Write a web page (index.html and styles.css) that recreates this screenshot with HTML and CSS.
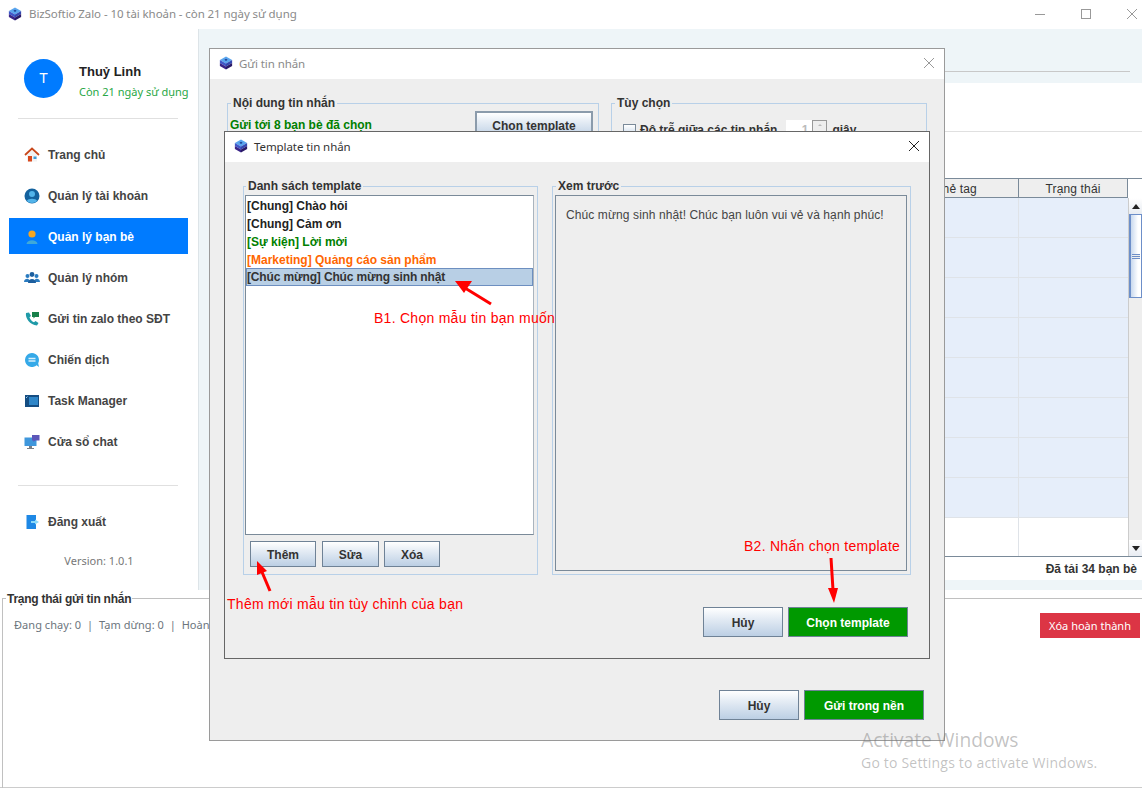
FILE: index.html
```html
<!DOCTYPE html>
<html lang="vi">
<head>
  <meta charset="UTF-8">
  <title>BizSoftio Zalo</title>
  <link rel="stylesheet" href="styles.css">
</head>
<body>
  <svg class="defs" width="0" height="0">
    <symbol id="cube" viewBox="0 0 16 16">
      <path d="M8 0.5 15 4.5 8 8.5 1 4.5Z" fill="#5aa5ee"/>
      <path d="M1 4.5 8 8.5V12L1 8Z" fill="#3f57c8"/>
      <path d="M15 4.5 8 8.5V12L15 8Z" fill="#3448b0"/>
      <path d="M1 8 8 12V15.5L1 11.5Z" fill="#3a2488"/>
      <path d="M15 8 8 12V15.5L15 11.5Z" fill="#2a1a68"/>
      <path d="M8 3.2 9.8 4.4 8 5.6 6.2 4.4Z" fill="#1c3f92"/>
    </symbol>
  </svg>

  <div class="titlebar">
    <svg class="app-icon"><use href="#cube"/></svg>
    <span class="titlebar-text">BizSoftio Zalo - 10 tài khoản - còn 21 ngày sử dụng</span>
    <div class="win-controls">
      <svg width="12" height="12" viewBox="0 0 12 12"><path d="M1 6.5H11" stroke="#999" stroke-width="1"/></svg>
      <svg width="12" height="12" viewBox="0 0 12 12"><rect x="1.5" y="1.5" width="9" height="9" fill="none" stroke="#999"/></svg>
      <svg width="12" height="12" viewBox="0 0 12 12"><path d="M1 1 11 11M11 1 1 11" stroke="#999"/></svg>
    </div>
  </div>

  <div class="middle">
    <aside class="sidebar">
      <div class="profile">
        <div class="avatar">T</div>
        <div class="profile-text">
          <div class="profile-name">Thuỷ Linh</div>
          <div class="profile-days">Còn 21 ngày sử dụng</div>
        </div>
      </div>
      <ul class="menu">
        <li class="menu-item">
          <svg class="menu-icon" viewBox="0 0 16 16"><path d="M3 8 8 3.5 13 8V14.5H3Z" fill="#f2f2f2"/><path d="M1 8 8 1.5 15 8" fill="none" stroke="#c8481c" stroke-width="1.8"/><rect x="4" y="9" width="4" height="5.5" fill="#d9481c"/><rect x="9.5" y="9.5" width="3" height="2.5" fill="#3d9ad6"/></svg>
          Trang chủ
        </li>
        <li class="menu-item">
          <svg class="menu-icon" viewBox="0 0 16 16"><circle cx="8" cy="8" r="7.5" fill="#14629e"/><circle cx="8" cy="6" r="3" fill="#52b4ea"/><path d="M2.8 13C4 10 12 10 13.2 13 11 15.6 5 15.6 2.8 13Z" fill="#52b4ea"/></svg>
          Quản lý tài khoản
        </li>
        <li class="menu-item active">
          <svg class="menu-icon" viewBox="0 0 16 16"><circle cx="8" cy="5" r="3.6" fill="#f5a623"/><path d="M2.5 15C3 10 13 10 13.5 15Z" fill="#3fa9d8"/></svg>
          Quản lý bạn bè
        </li>
        <li class="menu-item">
          <svg class="menu-icon" viewBox="0 0 16 16"><circle cx="3.5" cy="6" r="2" fill="#2a7bc0"/><circle cx="12.5" cy="6" r="2" fill="#2a7bc0"/><circle cx="8" cy="4.5" r="2.4" fill="#1d5f9e"/><path d="M0 12C0 8 5 8 5 10V12ZM16 12C16 8 11 8 11 10V12Z" fill="#2a7bc0"/><path d="M4 13C4 7.5 12 7.5 12 13Z" fill="#1d5f9e"/></svg>
          Quản lý nhóm
        </li>
        <li class="menu-item">
          <svg class="menu-icon" viewBox="0 0 16 16"><path d="M2 2C1 7 6 14 13 14.5L14.5 12 11.5 10 10 11.2C8 10.4 6 8 5.5 6.2L7 5 5 1.5Z" fill="#1f9aa8"/><path d="M8 1H15V6H11L9.5 7.5V6H8Z" fill="#17804a"/></svg>
          Gửi tin zalo theo SĐT
        </li>
        <li class="menu-item">
          <svg class="menu-icon" viewBox="0 0 16 16"><path d="M8 1A7 7 0 1 0 12.6 13.3L15 15 14.2 11.2A7 7 0 0 0 8 1Z" fill="#35a9e8"/><path d="M4.5 6.5H11.5M4.5 9H11.5" stroke="#d8f0fc" stroke-width="1.4"/></svg>
          Chiến dịch
        </li>
        <li class="menu-item">
          <svg class="menu-icon" viewBox="0 0 16 16"><rect x="1" y="2" width="14" height="12" fill="#154d82"/><rect x="5" y="4" width="9" height="8" fill="#2f86c8"/><path d="M2 5 3.5 3.5" stroke="#9fd0f0"/></svg>
          Task Manager
        </li>
        <li class="menu-item">
          <svg class="menu-icon" viewBox="0 0 16 16"><rect x="0.5" y="3.5" width="12" height="8.5" fill="#3f97dc"/><path d="M5 12H8V14H10V15H3V14H5Z" fill="#7a7f86"/><path d="M8 1H15.5V6.5H11L9.5 8V6.5H8Z" fill="#5c56b8"/></svg>
          Cửa sổ chat
        </li>
      </ul>
      <div class="logout">
        <div class="menu-item">
          <svg class="menu-icon" viewBox="0 0 16 16"><rect x="2.5" y="1" width="9.5" height="14" fill="#1e88e5"/><path d="M7 8H12" stroke="#8ad8f8" stroke-width="2"/><path d="M11 5.5 15 8 11 10.5Z" fill="#8ad8f8"/></svg>
          Đăng xuất
        </div>
      </div>
      <div class="version">Version: 1.0.1</div>
    </aside>

    <main class="main">
      <div class="band"><div class="band-line"></div></div>
      <div class="content">
        <div class="filter-row"></div>
        <div class="table-wrap">
          <div class="table">
            <div class="thead">
              <div class="th col-main"></div>
              <div class="th col-tag">Thẻ tag</div>
              <div class="th col-status">Trạng thái</div>
            </div>
            <div class="tr on"><div class="col-main"></div><div class="td col-tag"></div><div class="td col-status"></div></div>
            <div class="tr on"><div class="col-main"></div><div class="td col-tag"></div><div class="td col-status"></div></div>
            <div class="tr on"><div class="col-main"></div><div class="td col-tag"></div><div class="td col-status"></div></div>
            <div class="tr on"><div class="col-main"></div><div class="td col-tag"></div><div class="td col-status"></div></div>
            <div class="tr on"><div class="col-main"></div><div class="td col-tag"></div><div class="td col-status"></div></div>
            <div class="tr on"><div class="col-main"></div><div class="td col-tag"></div><div class="td col-status"></div></div>
            <div class="tr on"><div class="col-main"></div><div class="td col-tag"></div><div class="td col-status"></div></div>
            <div class="tr on"><div class="col-main"></div><div class="td col-tag"></div><div class="td col-status"></div></div>
            <div class="tr last"><div class="col-main"></div><div class="td col-tag"></div><div class="td col-status"></div></div>
          </div>
          <div class="scrollbar">
            <div class="scroll-btn"><span class="tri-up"></span></div>
            <div class="scroll-thumb"><span class="grip"></span></div>
            <div class="scroll-track"></div>
            <div class="scroll-btn"><span class="tri-down"></span></div>
          </div>
        </div>
        <div class="status-row">Đã tải 34 bạn bè</div>
      </div>
    </main>
  </div>

  <section class="send-status">
    <div class="send-status-legend">Trạng thái gửi tin nhắn</div>
    <div class="send-status-row">
      <span class="send-counts">Đang chạy: 0 &nbsp;|&nbsp; Tạm dừng: 0 &nbsp;|&nbsp; Hoàn thành: 0</span>
      <button class="btn-danger">Xóa hoàn thành</button>
    </div>
  </section>

  <!-- dialog gửi tin nhắn -->
  <div class="dialog dialog-send">
    <div class="dialog-title">
      <svg class="dialog-icon"><use href="#cube"/></svg>
      <span class="muted">Gửi tin nhắn</span>
      <svg class="dialog-close" viewBox="0 0 12 12"><path d="M1 1 11 11M11 1 1 11" stroke="#999"/></svg>
    </div>
    <div class="dialog-body send-body">
      <div class="send-top">
        <fieldset class="group group-content">
          <legend>Nội dung tin nhắn</legend>
          <div class="content-row">
            <span class="green-label">Gửi tới 8 bạn bè đã chọn</span>
            <button class="btn btn-focus">Chọn template</button>
          </div>
        </fieldset>
        <fieldset class="group group-options">
          <legend>Tùy chọn</legend>
          <div class="option-row">
            <span class="checkbox"></span>
            <span>Độ trễ giữa các tin nhắn</span>
            <span class="spinner"><span class="spinner-val">1</span><span class="spinner-btn"><span class="spinner-up"></span></span></span>
            <span>giây</span>
          </div>
        </fieldset>
      </div>
      <div class="dialog-actions send-actions">
        <button class="btn btn-cancel">Hủy</button>
        <button class="btn btn-green">Gửi trong nền</button>
      </div>
    </div>
  </div>

  <!-- dialog template -->
  <div class="dialog dialog-template">
    <div class="dialog-title">
      <svg class="dialog-icon"><use href="#cube"/></svg>
      <span>Template tin nhắn</span>
      <svg class="dialog-close" viewBox="0 0 12 12"><path d="M1 1 11 11M11 1 1 11" stroke="#222"/></svg>
    </div>
    <div class="dialog-body template-body">
      <div class="template-top">
        <fieldset class="group group-list">
          <legend>Danh sách template</legend>
          <ul class="template-list">
            <li>[Chung] Chào hỏi</li>
            <li>[Chung] Cảm ơn</li>
            <li class="t-green">[Sự kiện] Lời mời</li>
            <li class="t-orange">[Marketing] Quảng cáo sản phẩm</li>
            <li class="selected">[Chúc mừng] Chúc mừng sinh nhật</li>
          </ul>
          <div class="list-actions">
            <button class="btn btn-add">Thêm</button>
            <button class="btn btn-edit">Sửa</button>
            <button class="btn btn-del">Xóa</button>
          </div>
        </fieldset>
        <fieldset class="group group-preview">
          <legend>Xem trước</legend>
          <div class="preview">Chúc mừng sinh nhật! Chúc bạn luôn vui vẻ và hạnh phúc!</div>
        </fieldset>
      </div>
      <div class="dialog-actions template-actions">
        <button class="btn btn-cancel">Hủy</button>
        <button class="btn btn-green">Chọn template</button>
      </div>
    </div>
  </div>

  <!-- chú thích đỏ -->
  <div class="note note-b1">B1. Chọn mẫu tin bạn muốn</div>
  <div class="note note-b2">B2. Nhấn chọn template</div>
  <div class="note note-add">Thêm mới mẫu tin tùy chỉnh của bạn</div>
  <svg class="arrows" width="1142" height="789" viewBox="0 0 1142 789">
    <path d="M491 304 465 288" stroke="#f00" stroke-width="3"/>
    <path d="M455 281 472 281 464 293Z" fill="#f00"/>
    <path d="M270 591 262 572" stroke="#f00" stroke-width="3"/>
    <path d="M257 561 267 571 257 575Z" fill="#f00"/>
    <path d="M831 558 833 590" stroke="#f00" stroke-width="3"/>
    <path d="M834 603 828 588 838 588Z" fill="#f00"/>
  </svg>

  <div class="activate">
    <div class="activate-big">Activate Windows</div>
    <div class="activate-small">Go to Settings to activate Windows.</div>
  </div>
</body>
</html>
```

FILE: styles.css
```css
* {
  box-sizing: border-box;
}
body {
  margin: 0;
  width: 1142px;
  height: 789px;
  overflow: hidden;
  position: relative;
  background: #fff;
  font-family: 'Liberation Sans', sans-serif;
  font-size: 12px;
  color: #333;
  display: flex;
  flex-direction: column;
}
.defs {
  position: absolute;
}

/* title bar */
.titlebar {
  height: 29px;
  display: flex;
  align-items: center;
  padding: 0 0 2px 8px;
  flex-shrink: 0;
}
.app-icon {
  width: 14px;
  height: 14px;
  margin-right: 7px;
}
.titlebar-text {
  font-family: 'Noto Sans', sans-serif;
  font-size: 11.5px;
  letter-spacing: -0.08px;
  color: #8a8a8a;
}
.win-controls {
  margin-left: auto;
  display: flex;
  gap: 34px;
  padding-right: 4px;
}

/* layout */
.middle {
  height: 561px;
  display: flex;
  flex-shrink: 0;
}
.sidebar {
  width: 199px;
  border-right: 1px solid #dde4e8;
  padding: 29px 0 0 9px;
}
.profile {
  display: flex;
  align-items: center;
  gap: 16px;
  height: 40px;
  margin-left: 15px;
}
.avatar {
  width: 39px;
  height: 39px;
  border-radius: 50%;
  background: #007bff;
  color: #fff;
  font-size: 14px;
  display: flex;
  align-items: center;
  justify-content: center;
}
.profile-text {
  padding-top: 6px;
}
.profile-name {
  font-size: 13px;
  font-weight: bold;
  color: #222;
  margin-bottom: 5px;
}
.profile-days {
  font-family: 'Noto Sans', sans-serif;
  font-size: 11px;
  color: #28a745;
  white-space: nowrap;
}
.menu {
  list-style: none;
  margin: 20px 0 0 9px;
  padding: 17px 0 0;
  border-top: 1px solid #e0e0e0;
  width: 160px;
}
.menu-item {
  height: 36px;
  width: 179px;
  margin-left: -9px;
  margin-bottom: 5px;
  padding: 2px 0 0 15px;
  display: flex;
  align-items: center;
  gap: 8px;
  font-weight: bold;
  color: #444;
  white-space: nowrap;
}
.menu-item.active {
  background: #007bff;
  color: #fff;
}
.menu-icon {
  width: 16px;
  height: 16px;
  flex-shrink: 0;
}
.logout {
  margin: 26px 0 0 9px;
  width: 160px;
  padding-top: 17px;
  border-top: 1px solid #e0e0e0;
}
.version {
  font-family: 'Noto Sans', sans-serif;
  font-size: 11px;
  color: #777;
  text-align: center;
  width: 160px;
  margin: 14px 0 0 10px;
}

.main {
  flex: 1;
  background: #eef5f8;
  padding: 0 0 10px 10px;
  display: flex;
  flex-direction: column;
}
.band {
  height: 54px;
  flex-shrink: 0;
}
.band-line {
  margin: 42px 12px 0 0;
  border-top: 1px solid #c8c8c8;
}
.content {
  flex: 1;
  background: #fff;
  display: flex;
  flex-direction: column;
}
.filter-row {
  height: 49px;
  border-bottom: 1px solid #e0e0e0;
  margin-bottom: 46px;
  flex-shrink: 0;
}
.table-wrap {
  height: 379px;
  display: flex;
  border-top: 1px solid #7a8a99;
  border-bottom: 1px solid #7a8a99;
}
.table {
  flex: 1;
  overflow: hidden;
}
.thead {
  height: 19px;
  display: flex;
  background: #eee;
  border-bottom: 1px solid #7a8a99;
}
.th {
  text-align: center;
  line-height: 20px;
  letter-spacing: 0.15px;
  color: #333;
  border-right: 1px solid #7a8a99;
}
.tr {
  height: 40px;
  display: flex;
}
.tr.on {
  background: #e6eefa;
  border-bottom: 1px solid #dfe3e8;
}
.col-main {
  flex: 1;
}
.col-tag {
  width: 125px;
}
.col-status {
  width: 109px;
}
.td.col-tag {
  border-right: 1px solid #dfe3e8;
}
.scrollbar {
  width: 14px;
  margin-top: 19px;
  display: flex;
  flex-direction: column;
  background: #eee;
  border-left: 1px solid #ccc;
}
.scroll-btn {
  height: 16px;
  background: linear-gradient(#fff, #e8ecf2);
  display: flex;
  align-items: center;
  justify-content: center;
  flex-shrink: 0;
}
.scroll-thumb {
  height: 84px;
  border: 1px solid #6d8fc9;
  border-left-width: 2px;
  background: linear-gradient(90deg, #c9d9ee, #fff 70%);
  display: flex;
  align-items: center;
  justify-content: center;
}
.grip {
  width: 8px;
  height: 5px;
  border-top: 1px solid #6d8fc9;
  border-bottom: 1px solid #6d8fc9;
  background: linear-gradient(#eee 40%, #6d8fc9 40%, #6d8fc9 60%, #eee 60%);
}
.scroll-track {
  flex: 1;
}
.tri-up {
  border: 4px solid transparent;
  border-top: 0;
  border-bottom: 5px solid #222;
}
.tri-down {
  border: 4px solid transparent;
  border-bottom: 0;
  border-top: 5px solid #222;
}
.status-row {
  flex: 1;
  font-weight: bold;
  text-align: right;
  color: #333;
  padding: 5px 5px 0 0;
}

/* bottom panel */
.send-status {
  height: 198px;
  border-bottom: 1px solid #ccc;
  position: relative;
  padding: 8px 0 0 2px;
}
.send-status-legend {
  position: absolute;
  left: 6px;
  top: 2px;
  background: #fff;
  padding: 0 1px;
  font-weight: bold;
  letter-spacing: -0.25px;
  color: #333;
  z-index: 1;
}
.send-status-row {
  border-top: 1px solid #c0c0c0;
  border-left: 1px solid #c0c0c0;
  height: 190px;
  display: flex;
  justify-content: space-between;
  padding: 14px 2px 0 11px;
}
.send-counts {
  font-family: 'Noto Sans', sans-serif;
  font-size: 11px;
  letter-spacing: 0.05px;
  color: #6c757d;
  padding-top: 4px;
}
.btn-danger {
  width: 100px;
  height: 25px;
  border: 0;
  background: #dc3545;
  color: #fff;
  font-family: 'Noto Sans', sans-serif;
  font-size: 11px;
}

/* dialogs */
.dialog {
  position: absolute;
  background: #eee;
  display: flex;
  flex-direction: column;
}
.dialog-send {
  left: 209px;
  top: 48px;
  width: 736px;
  height: 693px;
  border: 1px solid #9a9a9a;
}
.dialog-template {
  left: 224px;
  top: 131px;
  width: 706px;
  height: 528px;
  border: 1px solid #666;
}
.dialog-title {
  height: 30px;
  background: #fff;
  display: flex;
  align-items: center;
  padding: 0 9px 2px;
  gap: 6px;
  flex-shrink: 0;
  font-family: 'Noto Sans', sans-serif;
  font-size: 11.5px;
  letter-spacing: -0.08px;
}
.muted {
  color: #8a8a8a;
}
.dialog-icon {
  width: 14px;
  height: 14px;
}
.dialog-close {
  width: 12px;
  height: 12px;
  margin-left: auto;
}
.dialog-body {
  flex: 1;
  display: flex;
  flex-direction: column;
  justify-content: space-between;
}
.send-body {
  padding: 17px 17px 20px 17px;
}
.template-body {
  padding: 17px 18px 21px 18px;
}
.group {
  margin: 0;
  padding: 0;
  border: 1px solid #b8d0e8;
  font-weight: bold;
  color: #333;
  min-width: 0;
}
.group legend {
  margin-left: 1px;
  padding: 0 2px;
  line-height: 14px;
  color: #333;
}
.send-top {
  display: flex;
  gap: 12px;
}
.group-content {
  width: 372px;
  height: 100px;
  padding: 0 5px 0 2px;
}
.group-options {
  flex: 1;
  height: 100px;
  padding: 10px 0 0;
}
.group-options legend {
  margin-left: 3px;
}
.content-row {
  display: flex;
  justify-content: space-between;
  align-items: flex-start;
}
.green-label {
  color: #008000;
  padding-top: 8px;
}
.option-row {
  display: flex;
  align-items: center;
  gap: 4px;
  padding-left: 11px;
}
.checkbox {
  width: 13px;
  height: 13px;
  border: 1px solid #7a8a99;
  background: linear-gradient(#fff, #c5d6e8);
}
.spinner {
  width: 41px;
  height: 20px;
  display: flex;
  margin: 0 1px 0 5px;
}
.spinner-val {
  flex: 1;
  background: #fff;
  color: #bbb;
  text-align: right;
  padding: 3px 4px 0 0;
}
.spinner-btn {
  width: 15px;
  border: 1px solid #999;
  background: #eee;
  display: flex;
  justify-content: center;
  padding-top: 3px;
}
.spinner-up {
  border: 2px solid transparent;
  border-top: 0;
  border-bottom: 2px solid #bbb;
  height: 2px;
}
.btn {
  font-family: 'Liberation Sans', sans-serif;
  font-size: 12px;
  font-weight: bold;
  color: #333;
  border: 1px solid #6f8296;
  background: linear-gradient(#fff, #e6edf5 35%, #bccfe4);
  padding: 1px 0 0;
}
.btn-focus {
  width: 118px;
  height: 28px;
  border: 2px solid #8b9bab;
  margin-top: 1px;
}
.btn-cancel {
  width: 80px;
  height: 30px;
}
.btn-green {
  width: 120px;
  height: 30px;
  background: #009900;
  color: #fff;
}
.dialog-actions {
  display: flex;
  justify-content: flex-end;
  gap: 5px;
}
.send-actions,
.template-actions {
  padding-right: 3px;
}
.template-top {
  display: flex;
  gap: 14px;
}
.group-list {
  width: 295px;
  height: 396px;
  padding: 2px 3px 0 1px;
}
.group-preview {
  width: 359px;
  height: 396px;
  padding: 2px 3px 2px 2px;
}
.template-list {
  list-style: none;
  margin: 0;
  height: 340px;
  padding: 0;
  background: #fff;
  border: 1px solid #7a8a99;
  border-right-color: #aab4be;
}
.template-list li {
  height: 18px;
  line-height: 18px;
  padding: 1px 0 0 1px;
  color: #222;
}
.template-list .t-green {
  color: #008000;
}
.template-list .t-orange {
  color: #ff6600;
}
.template-list .selected {
  background: #b8cfe5;
  border: 1px solid #6d8fc0;
  line-height: 16px;
  padding: 0;
  letter-spacing: -0.15px;
  color: #333;
}
.list-actions {
  display: flex;
  gap: 6px;
  margin: 6px 0 0 5px;
}
.btn-add {
  width: 66px;
  height: 26px;
}
.btn-edit {
  width: 57px;
  height: 26px;
  margin-right: -1px;
}
.btn-del {
  width: 56px;
  height: 26px;
}
.preview {
  height: 376px;
  background: #eee;
  border: 1px solid #7a8a99;
  padding: 12px 10px;
  font-weight: normal;
  letter-spacing: 0.1px;
  color: #444;
}

/* annotations */
.note {
  position: absolute;
  font-family: 'Liberation Sans', sans-serif;
  font-size: 14px;
  letter-spacing: 0.27px;
  color: #f00;
  white-space: nowrap;
}
.note-b1 {
  left: 374px;
  top: 310px;
}
.note-b2 {
  left: 744px;
  top: 538px;
}
.note-add {
  left: 227px;
  top: 596px;
}
.arrows {
  position: absolute;
  left: 0;
  top: 0;
  pointer-events: none;
}
.activate {
  position: absolute;
  left: 861px;
  top: 727px;
  font-family: 'Open Sans', sans-serif;
  color: rgba(120, 120, 120, 0.45);
  white-space: nowrap;
}
.activate-big {
  font-size: 19.2px;
  line-height: 26px;
}
.activate-small {
  font-size: 14px;
  line-height: 19px;
  letter-spacing: 0.2px;
}
```
